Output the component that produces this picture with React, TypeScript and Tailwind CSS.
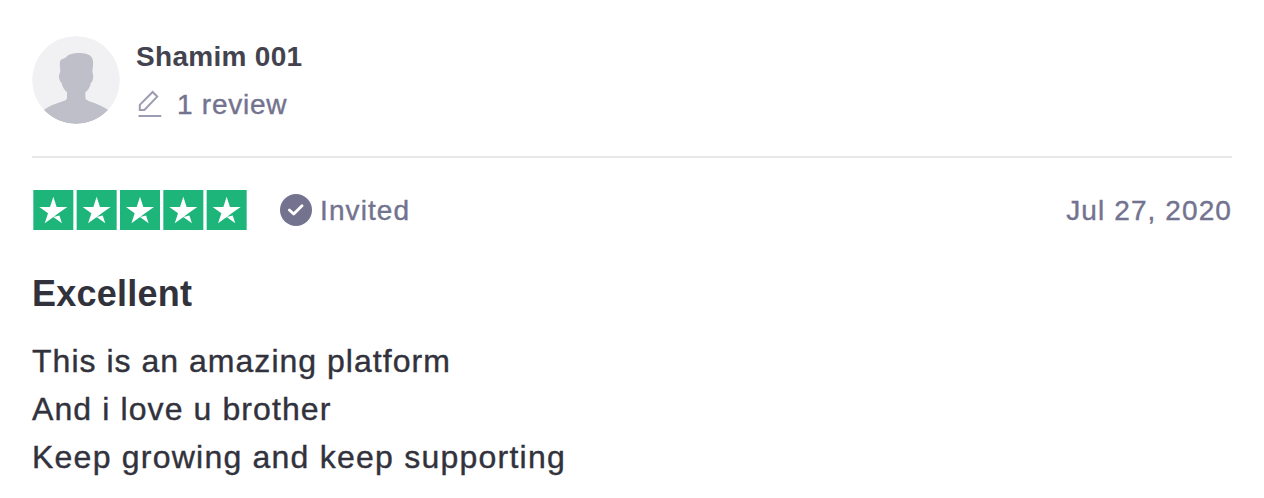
import React from 'react';

interface ReviewLine {
  text: string;
  tracking: string;
}

interface Review {
  author: string;
  reviewCount: string;
  rating: number;
  label: string;
  date: string;
  title: string;
  lines: ReviewLine[];
}

const review: Review = {
  author: "Shamim 001",
  reviewCount: "1 review",
  rating: 5,
  label: "Invited",
  date: "Jul 27, 2020",
  title: "Excellent",
  lines: [
    { text: "This is an amazing platform", tracking: "tracking-[1.02px]" },
    { text: "And i love u brother", tracking: "tracking-[1.1px]" },
    { text: "Keep growing and keep supporting", tracking: "tracking-[1.23px]" },
  ],
};

const Avatar: React.FC = () => (
  <svg className="w-[88px] h-[88px] shrink-0 rounded-full" viewBox="0 0 88 88">
    <circle cx="44" cy="44" r="44" fill="#f1f1f4" />
    <path
      fill="#bfbfc9"
      d="M35 56.3 C32 53.5 30.2 50.5 29.6 47 C27.3 45.6 26.2 40 27.6 37.6 C28.6 36 28.3 34.6 28 31.5 C27.6 28 27.6 25 29.3 23.6 C31 22.3 32.6 23 34.2 21 C36.5 18 42 17 47 17 C52 17 57 17.8 59.6 21.2 C61.8 24 61.2 30 60.5 34 C60.2 36 61 37 61.2 40 C61.4 43.5 60 46.4 58.8 47 C58.2 50.6 56.4 54 53.4 56.3 V61.5 C53.4 63.7 55 64.3 58 65.4 C65 67.8 71 70.2 76.2 73.9 A44 44 0 0 1 11.8 73.9 C17 70.2 23.5 67.8 30 65.6 C33.5 64.4 35 63.9 35 61.5 Z"
    />
  </svg>
);

const PencilIcon: React.FC = () => (
  <svg className="w-6 h-7" viewBox="0 0 24 28" fill="none" stroke="#9c9cb2" strokeWidth="2">
    <path d="M1.8 20 V14.8 L14.6 2 L19.2 6.6 L6.4 20 Z" />
    <path d="M0.5 26 H23.3" />
  </svg>
);

const CheckBadge: React.FC = () => (
  <svg className="w-8 h-8" viewBox="0 0 32 32">
    <circle cx="16" cy="16" r="16" fill="#73738f" />
    <path
      d="M9.4 16 L13.7 20 L22 11.8"
      fill="none"
      stroke="#fff"
      strokeWidth="2.9"
      strokeLinecap="round"
      strokeLinejoin="round"
    />
  </svg>
);

const Stars: React.FC<{ rating: number }> = ({ rating }) => (
  <svg className="w-[216px] h-10" viewBox="0 0 216 40">
    {Array.from({ length: rating }, (_, i) => (
      <g key={i} transform={`translate(${1.33 + i * 43.333} 0)`}>
        <rect width="40" height="40" fill="#1eb57b" />
        <path
          fill="#fff"
          d="M20 27 l6.1 -1.5 L28.6 33.3 Z M34 17 H23.3 L20 6.8 L16.7 17 H6 L14.7 23.3 L11.4 33.3 L20.1 27 L25.4 23.1 Z"
        />
      </g>
    ))}
  </svg>
);

const App: React.FC = () => {
  return (
    <div className="h-[498px] overflow-hidden bg-white px-8 pt-9 font-['Liberation_Sans',Arial,sans-serif]">
      {/* Reviewer */}
      <div className="flex gap-4 border-b-2 border-[#e8e8ea] pb-8">
        <Avatar />
        <div className="flex flex-col">
          <span className="h-10 pt-px text-[28px] leading-10 font-bold tracking-[0.3px] text-[#43434f]">
            {review.author}
          </span>
          <div className="mt-2 flex h-10 items-center gap-[15px] pl-[2px] text-[28px] leading-10 tracking-[0.75px] text-[#73738f] [-webkit-text-stroke:0.4px]">
            <PencilIcon />
            <span className="pt-[2px]">{review.reviewCount}</span>
          </div>
        </div>
      </div>

      {/* Rating, label and date */}
      <div className="mt-8 flex h-10 items-center justify-between text-[28px] leading-10 tracking-[1.1px] text-[#73738f] [-webkit-text-stroke:0.4px]">
        <div className="flex items-center">
          <Stars rating={review.rating} />
          <div className="ml-8 flex items-center gap-2">
            <CheckBadge />
            <span className="pt-[2px]">{review.label}</span>
          </div>
        </div>
        <span className="pt-[2px]">{review.date}</span>
      </div>

      {/* Review body */}
      <h2 className="mt-10 text-[36px] leading-12 font-bold tracking-[0.25px] text-[#32323d]">
        {review.title}
      </h2>
      <div className="mt-[19px] text-[32px] leading-12 text-[#32323d] [-webkit-text-stroke:0.4px]">
        {review.lines.map((line) => (
          <p key={line.text} className={line.tracking}>{line.text}</p>
        ))}
      </div>
    </div>
  );
};

export default App;
